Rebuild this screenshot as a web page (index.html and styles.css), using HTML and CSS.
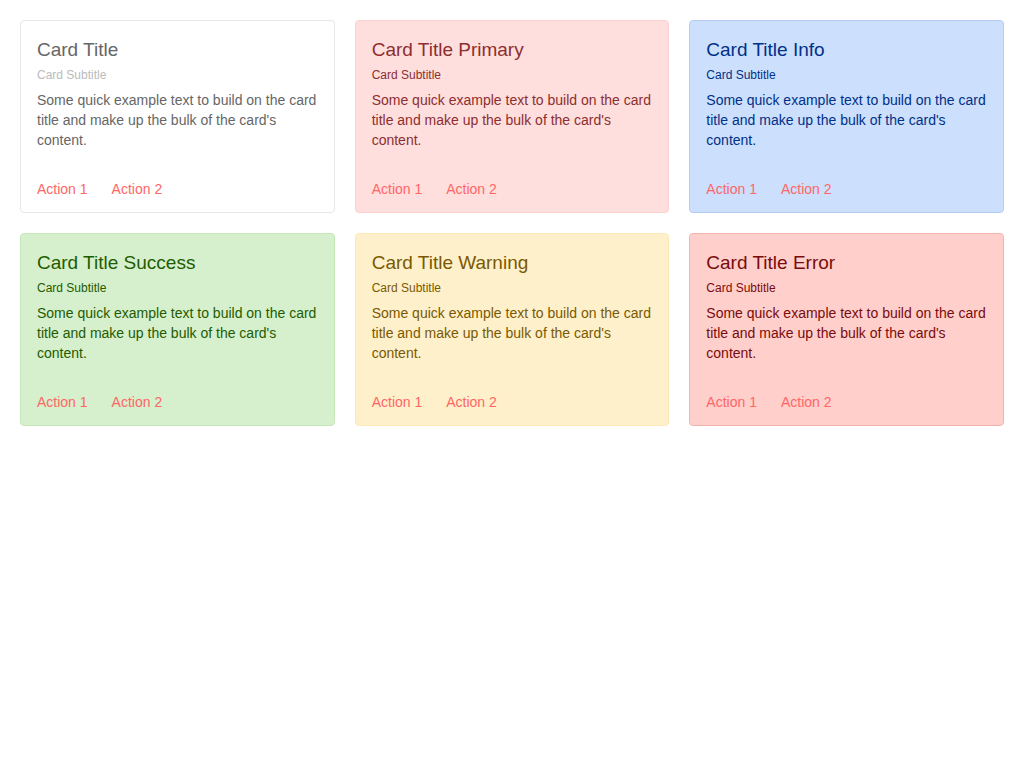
FILE: index.html
```html
<!DOCTYPE html>
<html lang="en">
<head>
<meta charset="utf-8">
<title>Cards</title>
<link rel="stylesheet" href="styles.css">
</head>
<body>
<div class="grid">
  <div class="card">
    <h2 class="card-title">Card Title</h2>
    <div class="card-subtitle">Card Subtitle</div>
    <p class="card-text">Some quick example text to build on the card title and make up the bulk of the card's content.</p>
    <div class="card-actions"><a class="action">Action 1</a><a class="action">Action 2</a></div>
  </div>
  <div class="card card-primary">
    <h2 class="card-title">Card Title Primary</h2>
    <div class="card-subtitle">Card Subtitle</div>
    <p class="card-text">Some quick example text to build on the card title and make up the bulk of the card's content.</p>
    <div class="card-actions"><a class="action">Action 1</a><a class="action">Action 2</a></div>
  </div>
  <div class="card card-info">
    <h2 class="card-title">Card Title Info</h2>
    <div class="card-subtitle">Card Subtitle</div>
    <p class="card-text">Some quick example text to build on the card title and make up the bulk of the card's content.</p>
    <div class="card-actions"><a class="action">Action 1</a><a class="action">Action 2</a></div>
  </div>
  <div class="card card-success">
    <h2 class="card-title">Card Title Success</h2>
    <div class="card-subtitle">Card Subtitle</div>
    <p class="card-text">Some quick example text to build on the card title and make up the bulk of the card's content.</p>
    <div class="card-actions"><a class="action">Action 1</a><a class="action">Action 2</a></div>
  </div>
  <div class="card card-warning">
    <h2 class="card-title">Card Title Warning</h2>
    <div class="card-subtitle">Card Subtitle</div>
    <p class="card-text">Some quick example text to build on the card title and make up the bulk of the card's content.</p>
    <div class="card-actions"><a class="action">Action 1</a><a class="action">Action 2</a></div>
  </div>
  <div class="card card-error">
    <h2 class="card-title">Card Title Error</h2>
    <div class="card-subtitle">Card Subtitle</div>
    <p class="card-text">Some quick example text to build on the card title and make up the bulk of the card's content.</p>
    <div class="card-actions"><a class="action">Action 1</a><a class="action">Action 2</a></div>
  </div>
</div>
</body>
</html>
```

FILE: styles.css
```css
* { box-sizing: border-box; }
html, body { margin: 0; background: #fff; }
body {
  padding: 20px;
  font-family: "Liberation Sans", Arial, sans-serif;
  color: #666;
}
.grid {
  display: grid;
  grid-template-columns: repeat(3, 1fr);
  gap: 20px;
}
.card {
  border: 1px solid #e6e6e6;
  border-radius: 4px;
  background: #fff;
  padding: 16px 16px 13px;
  display: flex;
  flex-direction: column;
}
.card-title {
  margin: 0;
  font-size: 19px;
  line-height: 25px;
  font-weight: normal;
}
.card-subtitle {
  margin-top: 5px;
  font-size: 12px;
  line-height: 17px;
  color: #bbb;
}
.card-text {
  margin: 6px 0 0;
  font-size: 14px;
  line-height: 20px;
}
.card-actions {
  margin-top: 29px;
  display: flex;
  gap: 24px;
  font-size: 14px;
  line-height: 20px;
}
.action { color: #ff6666; cursor: pointer; }

.card-primary { background: #ffdede; border-color: #fdd0d0; color: #8c2f2f; }
.card-info { background: #ccdffd; border-color: #b3cdf5; color: #003087; }
.card-success { background: #d6efcc; border-color: #c6e8b8; color: #1f5c00; }
.card-warning { background: #fff0cc; border-color: #fde8b6; color: #7a5a00; }
.card-error { background: #ffcfcc; border-color: #f5b3b0; color: #7a0b0b; }
.card-primary .card-subtitle,
.card-info .card-subtitle,
.card-success .card-subtitle,
.card-warning .card-subtitle,
.card-error .card-subtitle { color: inherit; }
```
